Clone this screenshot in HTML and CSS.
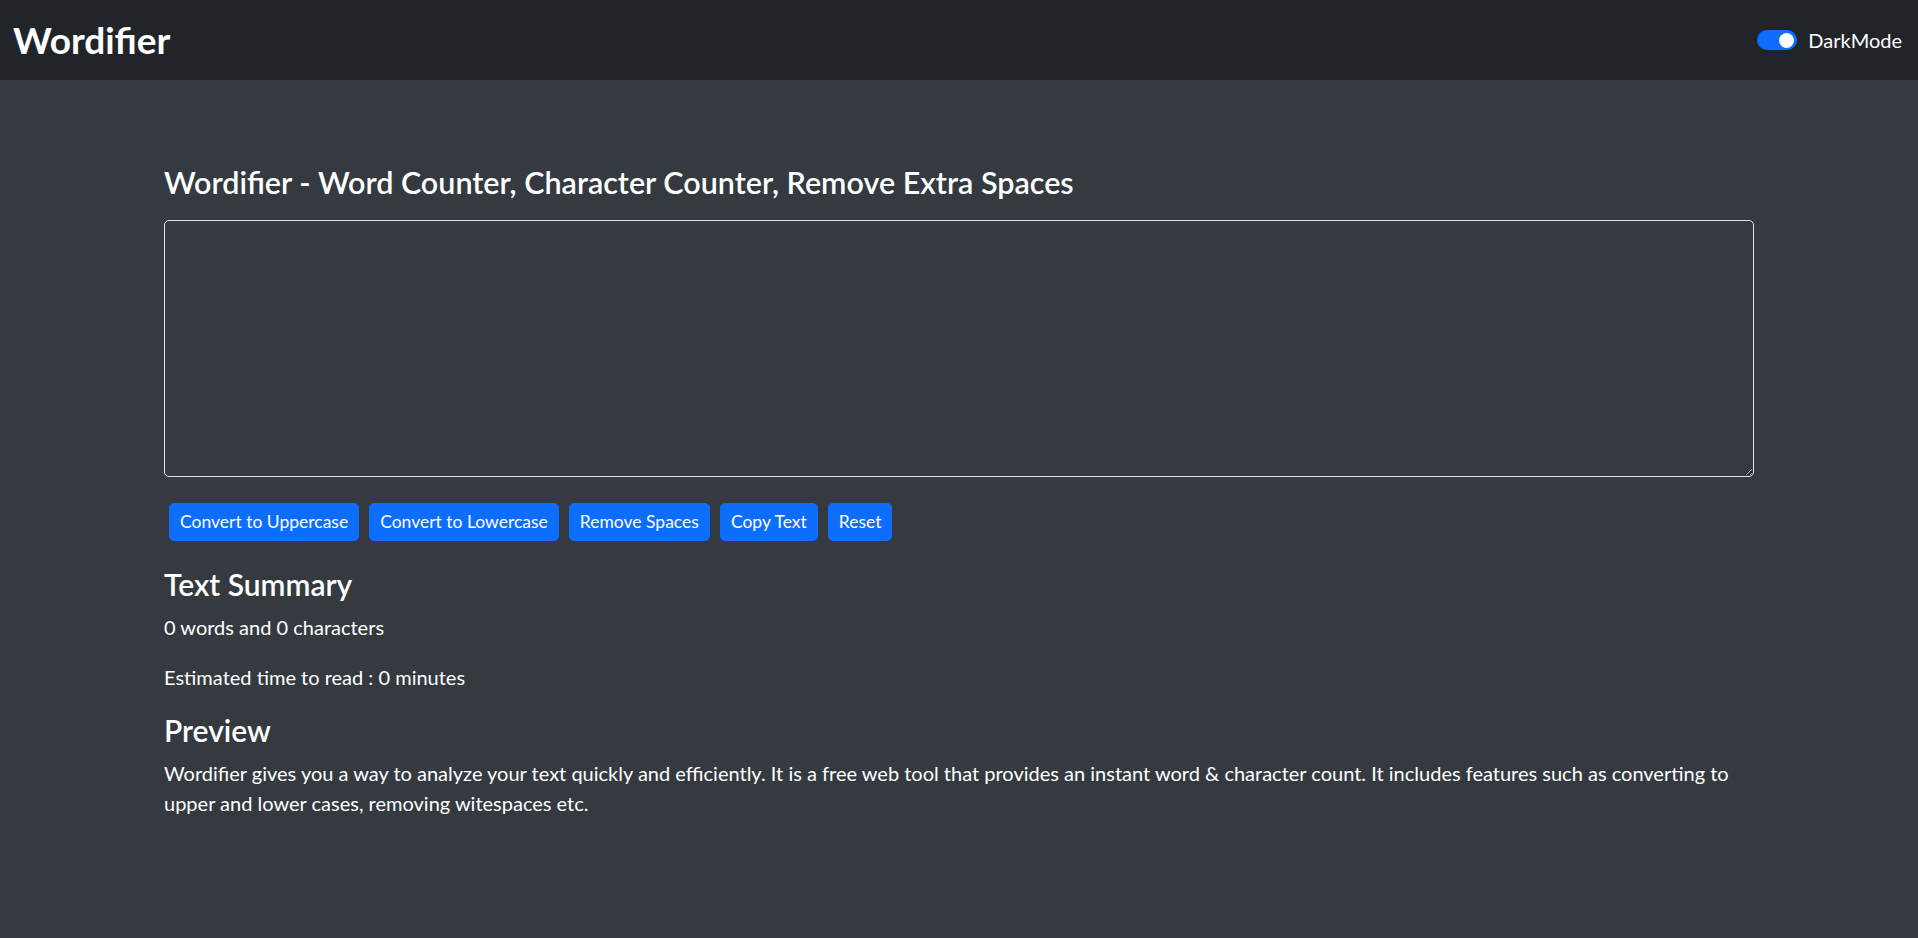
FILE: index.html
```html
<!DOCTYPE html>
<html lang="en">
<head>
<meta charset="utf-8">
<title>Wordifier</title>
<link rel="stylesheet" href="styles.css">
</head>
<body>
<nav class="navbar">
  <a class="brand" href="#">Wordifier</a>
  <label class="switch">
    <span class="switch-track"><span class="switch-knob"></span></span>
    <span class="switch-label">DarkMode</span>
  </label>
</nav>
<main class="container top">
  <h1 class="heading">Wordifier - Word Counter, Character Counter, Remove Extra Spaces</h1>
  <textarea class="form-control" rows="8"></textarea>
  <div class="btns">
    <button class="btn">Convert to Uppercase</button>
    <button class="btn">Convert to Lowercase</button>
    <button class="btn">Remove Spaces</button>
    <button class="btn">Copy Text</button>
    <button class="btn">Reset</button>
  </div>
</main>
<section class="container summary">
  <h2 class="sub">Text Summary</h2>
  <p class="para">0 words and 0 characters</p>
  <p class="para">Estimated time to read : 0 minutes</p>
  <h2 class="sub">Preview</h2>
  <p class="para">Wordifier gives you a way to analyze your text quickly and efficiently. It is a free web tool that provides an instant word &amp; character count. It includes features such as converting to upper and lower cases, removing witespaces etc.</p>
</section>
</body>
</html>
```
FILE: styles.css
```css
* { box-sizing: border-box; }

body {
  margin: 0;
  background: #343a40;
  color: #fff;
  font-family: Lato, "Noto Sans", sans-serif;
  font-size: 20px;
  line-height: 1.5;
}

.navbar {
  height: 80px;
  background: #212529;
  display: flex;
  align-items: center;
  justify-content: space-between;
  padding: 0 16px 0 13px;
}

.brand {
  color: #fff;
  text-decoration: none;
  font-size: 37px;
  font-weight: 700;
  line-height: 48px;
}

.switch {
  display: flex;
  align-items: center;
  gap: 11px;
  cursor: pointer;
}

.switch-track {
  width: 40px;
  height: 20px;
  border-radius: 10px;
  background: #0d6efd;
  display: flex;
  align-items: center;
  justify-content: flex-end;
  padding-right: 3px;
}

.switch-knob {
  width: 15px;
  height: 15px;
  border-radius: 50%;
  background: #fff;
}

.switch-label {
  font-size: 20px;
  line-height: 30px;
}

.container {
  width: 1590px;
  margin: 0 auto;
}

.top {
  padding-top: 84px;
}

.heading {
  font-size: 30.5px;
  line-height: 36px;
  font-weight: 600;
  margin: 0 0 20px;
}

.form-control {
  display: block;
  width: 100%;
  height: 257px;
  margin: 0 0 25px;
  padding: 8px 15px;
  background: transparent;
  color: #fff;
  border: 1px solid #dee2e6;
  border-radius: 5px;
  font: inherit;
}

.btns {
  display: flex;
  gap: 10px;
  padding-left: 5px;
  padding-top: 1px;
}

.btn {
  background: #0d6efd;
  border: 1px solid #0d6efd;
  color: #fff;
  font-family: inherit;
  font-size: 17.5px;
  line-height: 26px;
  padding: 5px 10px;
  border-radius: 5px;
  cursor: pointer;
}

.summary {
  margin-top: 25px;
}

.sub {
  font-size: 30px;
  line-height: 36px;
  font-weight: 600;
  margin: 0 0 10px;
}

.para {
  margin: 0 0 20px;
  line-height: 30px;
}
```
